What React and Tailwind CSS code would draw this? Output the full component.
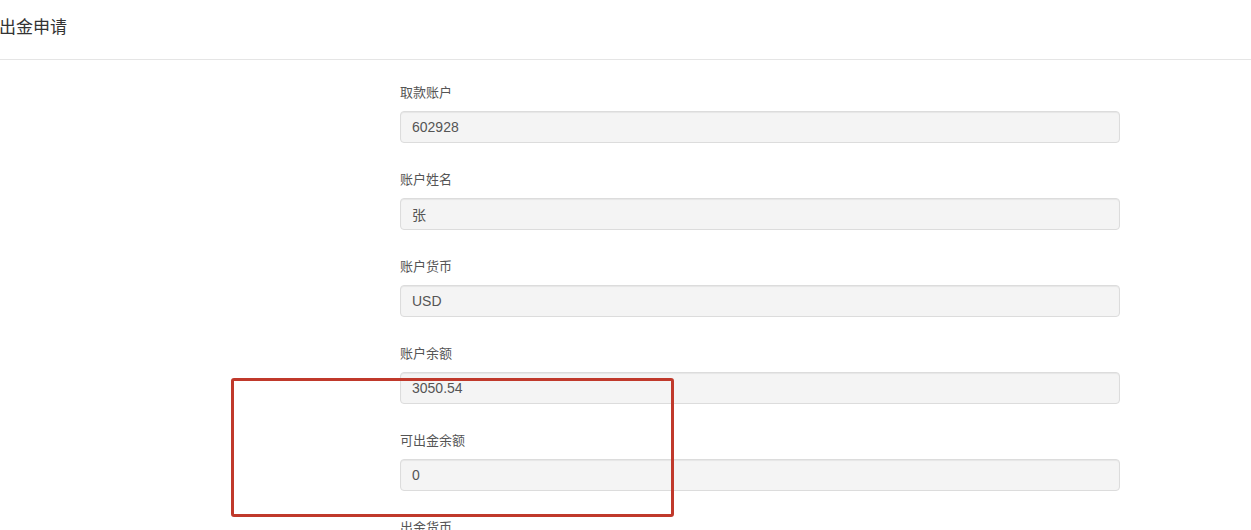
import React from 'react';

const fields = [
  { label: '取款账户', value: '602928' },
  { label: '账户姓名', value: '张' },
  { label: '账户货币', value: 'USD' },
  { label: '账户余额', value: '3050.54' },
  { label: '可出金余额', value: '0' },
  { label: '出金货币', value: '' },
];

const font = { fontFamily: '"Liberation Sans", "Noto Sans CJK SC", sans-serif' };

const App = () => {
  return (
    <div className="relative h-[530px] w-[1251px] overflow-hidden bg-white" style={font}>
      <div className="flex h-[60px] items-center border-b border-[#e5e5e5]">
        <h3 className="-ml-[1px] pb-[4px] text-[17px] leading-none text-[#333]">出金申请</h3>
      </div>

      <form className="ml-[400px] w-[720px] pt-[24px]">
        {fields.map((f) => (
          <div key={f.label} className="mb-[28px]">
            <label className="mb-[9px] block text-[13px] leading-[18px] text-[#555]">{f.label}</label>
            <input
              readOnly
              value={f.value}
              className="block h-[32px] w-full rounded-[4px] border border-[#dcdcdc] bg-[#f4f4f4] px-[11px] text-[14px] text-[#555] shadow-[inset_0_1px_1px_rgba(0,0,0,0.06)] outline-none"
            />
          </div>
        ))}
      </form>

      {/* red highlight drawn over the screenshot */}
      <div className="pointer-events-none absolute left-[231px] top-[378px] h-[139px] w-[443px] rounded-[3px] border-[3px] border-[#c0392b]" />
    </div>
  );
};

export default App;
